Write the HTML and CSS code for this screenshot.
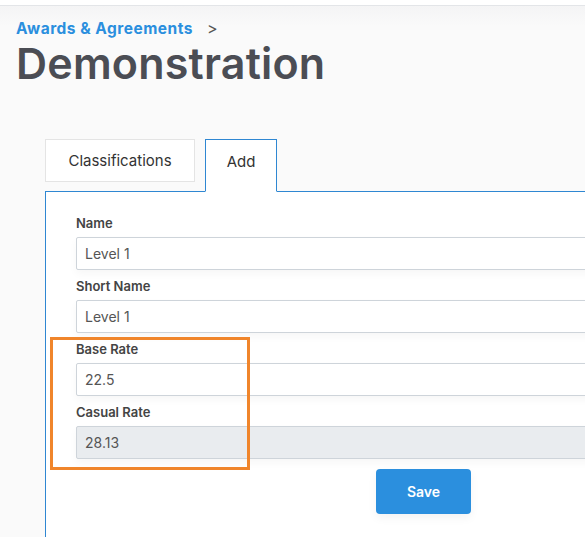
FILE: index.html
```html
<!DOCTYPE html>
<html lang="en">
<head>
<meta charset="utf-8">
<title>Demonstration</title>
<link rel="stylesheet" href="styles.css">
</head>
<body>
<div class="topbar"></div>
<div class="page">
  <nav class="crumbs"><a class="crumb-link">Awards &amp; Agreements</a><span class="crumb-sep">&gt;</span></nav>
  <h1 class="title">Demonstration</h1>
  <div class="tabs">
    <div class="tab">Classifications</div>
    <div class="tab active">Add</div>
  </div>
  <div class="panel">
    <form class="form">
      <div class="group">
        <label class="label">Name</label>
        <div class="input">Level 1</div>
      </div>
      <div class="group">
        <label class="label">Short Name</label>
        <div class="input">Level 1</div>
      </div>
      <div class="group">
        <label class="label">Base Rate</label>
        <div class="input">22.5</div>
      </div>
      <div class="group">
        <label class="label">Casual Rate</label>
        <div class="input disabled">28.13</div>
      </div>
      <div class="actions"><button type="button" class="btn">Save</button></div>
      <div class="highlight"></div>
    </form>
  </div>
</div>
</body>
</html>
```
FILE: styles.css
```css
html, body {
  margin: 0;
  padding: 0;
  height: 100%;
  overflow: hidden;
}
body {
  background: #fafafa;
  font-family: "Inter", "Liberation Sans", sans-serif;
  color: #333;
}
.topbar {
  height: 5px;
  background: #fff;
  border-bottom: 1px solid #e3e5e8;
}
.page {
  background: linear-gradient(#f4f4f5 0, #fafafa 20px);
  padding: 12px 0 0 16px;
  height: 100%;
}
.crumbs {
  display: flex;
  align-items: center;
  gap: 14px;
  height: 20px;
}
.crumb-link {
  color: #2b8fde;
  font-weight: 700;
  font-size: 15.5px;
  letter-spacing: 0.5px;
}
.crumb-sep {
  color: #555;
  font-size: 16px;
}
.title {
  margin: 0;
  font-size: 43px;
  font-weight: 600;
  color: #4b4d54;
  line-height: 50px;
  letter-spacing: 0.2px;
}
.tabs {
  display: flex;
  align-items: flex-start;
  margin: 51px 0 0 29px;
  position: relative;
  z-index: 1;
}
.tab {
  background: #fff;
  border: 1px solid #e4e4e4;
  font-size: 15px;
  color: #333;
  height: 41px;
  line-height: 41px;
  padding: 0 20px;
  width: 108px;
  text-align: center;
}
.tab.active {
  width: 30px;
  margin-left: 10px;
  border: 1px solid #2f87d2;
  border-bottom: 1px solid #fff;
  height: 51px;
  line-height: 43px;
}
.panel {
  margin: -1px 0 0 29px;
  background: #fff;
  border-top: 1px solid #2f87d2;
  border-left: 1px solid #2f87d2;
  width: 700px;
  height: 400px;
}
.form {
  position: relative;
  padding: 22px 0 0 30px;
  width: 640px;
}
.group {
  display: flex;
  flex-direction: column;
  margin-bottom: 7px;
}
.label {
  font-size: 13px;
  font-weight: 600;
  color: #444;
  line-height: 18px;
  margin-bottom: 5px;
}
.input {
  height: 31px;
  line-height: 31px;
  border: 1px solid #ced4da;
  border-radius: 2px;
  background: #fff;
  padding-left: 8px;
  font-size: 14px;
  color: #555;
  box-shadow: 0 4px 8px rgba(0, 0, 0, 0.035);
}
.input.disabled {
  background: #e9ecef;
}
.actions {
  padding: 3px 0 0 300px;
}
.btn {
  width: 95px;
  height: 45px;
  border: 0;
  border-radius: 4px;
  background: #2b8fde;
  color: #fff;
  font-family: inherit;
  font-size: 14px;
  font-weight: 600;
  box-shadow: 0 4px 10px rgba(0, 0, 0, 0.05);
}
.highlight {
  position: absolute;
  left: 4px;
  top: 145px;
  width: 194px;
  height: 127px;
  border: 3px solid #f0852b;
}
```
